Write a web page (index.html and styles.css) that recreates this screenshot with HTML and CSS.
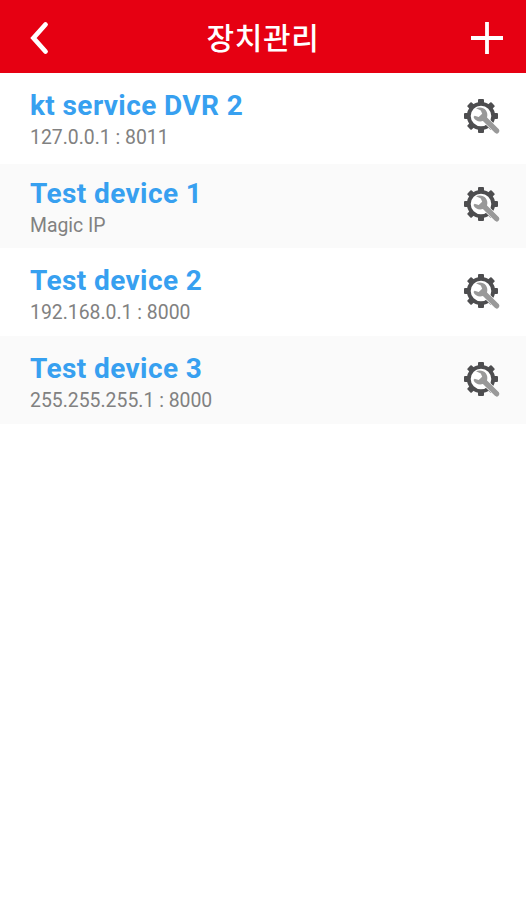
FILE: index.html
```html
<!DOCTYPE html>
<html lang="ko">
<head>
<meta charset="utf-8">
<title>장치관리</title>
<link rel="stylesheet" href="styles.css">
</head>
<body>
<svg class="defs" width="0" height="0" aria-hidden="true">
  <symbol id="settings" viewBox="0 0 40 40">
    <g fill="#4d4d4f">
      <g id="teeth">
        <rect x="15" y="1" width="6" height="7" rx="1"/>
        <rect x="15" y="28" width="6" height="7" rx="1"/>
        <rect x="1" y="15" width="7" height="6" rx="1"/>
        <rect x="28" y="15" width="7" height="6" rx="1"/>
      </g>
      <use href="#teeth" transform="rotate(45 18 18)"/>
    </g>
    <circle cx="18" cy="18" r="12.2" fill="#fff" stroke="#4d4d4f" stroke-width="3.8"/>
    <path d="M13 10.2C16.5 8.6 20.7 9.4 22.8 12.2C24.4 14.3 24.7 17 24 19.4L35.9 31.3Q37.2 32.9 35.6 34.7Q33.8 36.5 31.9 34.8L19.9 23C16 24.2 11.8 22.7 10.5 18.9L11.6 17.7L15.7 19L19.2 15.8L17.8 12.5Z" fill="#999" stroke="#fff" stroke-width="1.2" paint-order="stroke"/>
  </symbol>
</svg>
<header class="bar">
  <svg class="back" width="20" height="36" viewBox="0 0 20 36"><path d="M16.5 4.5L4.5 18L16.5 31.5"/></svg>
  <h1>장치관리</h1>
  <svg class="add" width="34" height="34" viewBox="0 0 34 34"><path d="M17 1V33M1 17H33"/></svg>
</header>
<main class="list">
  <section class="row">
    <div class="info"><h2>kt service DVR 2</h2><p>127.0.0.1 : 8011</p></div>
    <svg class="gear"><use href="#settings"/></svg>
  </section>
  <section class="row">
    <div class="info"><h2>Test device 1</h2><p>Magic IP</p></div>
    <svg class="gear"><use href="#settings"/></svg>
  </section>
  <section class="row">
    <div class="info"><h2>Test device 2</h2><p>192.168.0.1 : 8000</p></div>
    <svg class="gear"><use href="#settings"/></svg>
  </section>
  <section class="row">
    <div class="info"><h2>Test device 3</h2><p>255.255.255.1 : 8000</p></div>
    <svg class="gear"><use href="#settings"/></svg>
  </section>
</main>
</body>
</html>
```
FILE: styles.css
```css
* { box-sizing: border-box; }
body {
  margin: 0;
  min-height: 900px;
  background: #fff;
  font-family: Roboto, "Noto Sans CJK KR", sans-serif;
}
.defs { display: block; }
h1, h2, p { margin: 0; }
.bar {
  display: flex;
  align-items: center;
  justify-content: space-between;
  height: 72.5px;
  padding: 3px 22px 0 29px;
  background: #e60012;
}
.bar svg { fill: none; stroke: #fff; }
.back { stroke-width: 4.8; stroke-linecap: round; }
.add { stroke-width: 3.8; }
.bar h1 {
  padding: 0 0 3px 7px;
  color: #fff;
  font: 500 30px/40px "Noto Sans CJK KR", sans-serif;
  letter-spacing: 0.6px;
}
.row {
  display: flex;
  justify-content: space-between;
  height: 87.7px;
  padding: 16px 23px 0 30px;
}
.row:nth-child(even) { background: #fafafa; }
.row:first-child { height: 91px; }
.row:nth-child(2) {
  height: 84.7px;
  padding-top: 13px;
}
h2 {
  color: #37a0f0;
  font-size: 28px;
  line-height: 34px;
  font-weight: 700;
  letter-spacing: 0.4px;
}
p {
  color: #818181;
  font-size: 19.4px;
  line-height: 29px;
}
.gear { width: 40px; height: 40px; margin-top: 9px; }
```
